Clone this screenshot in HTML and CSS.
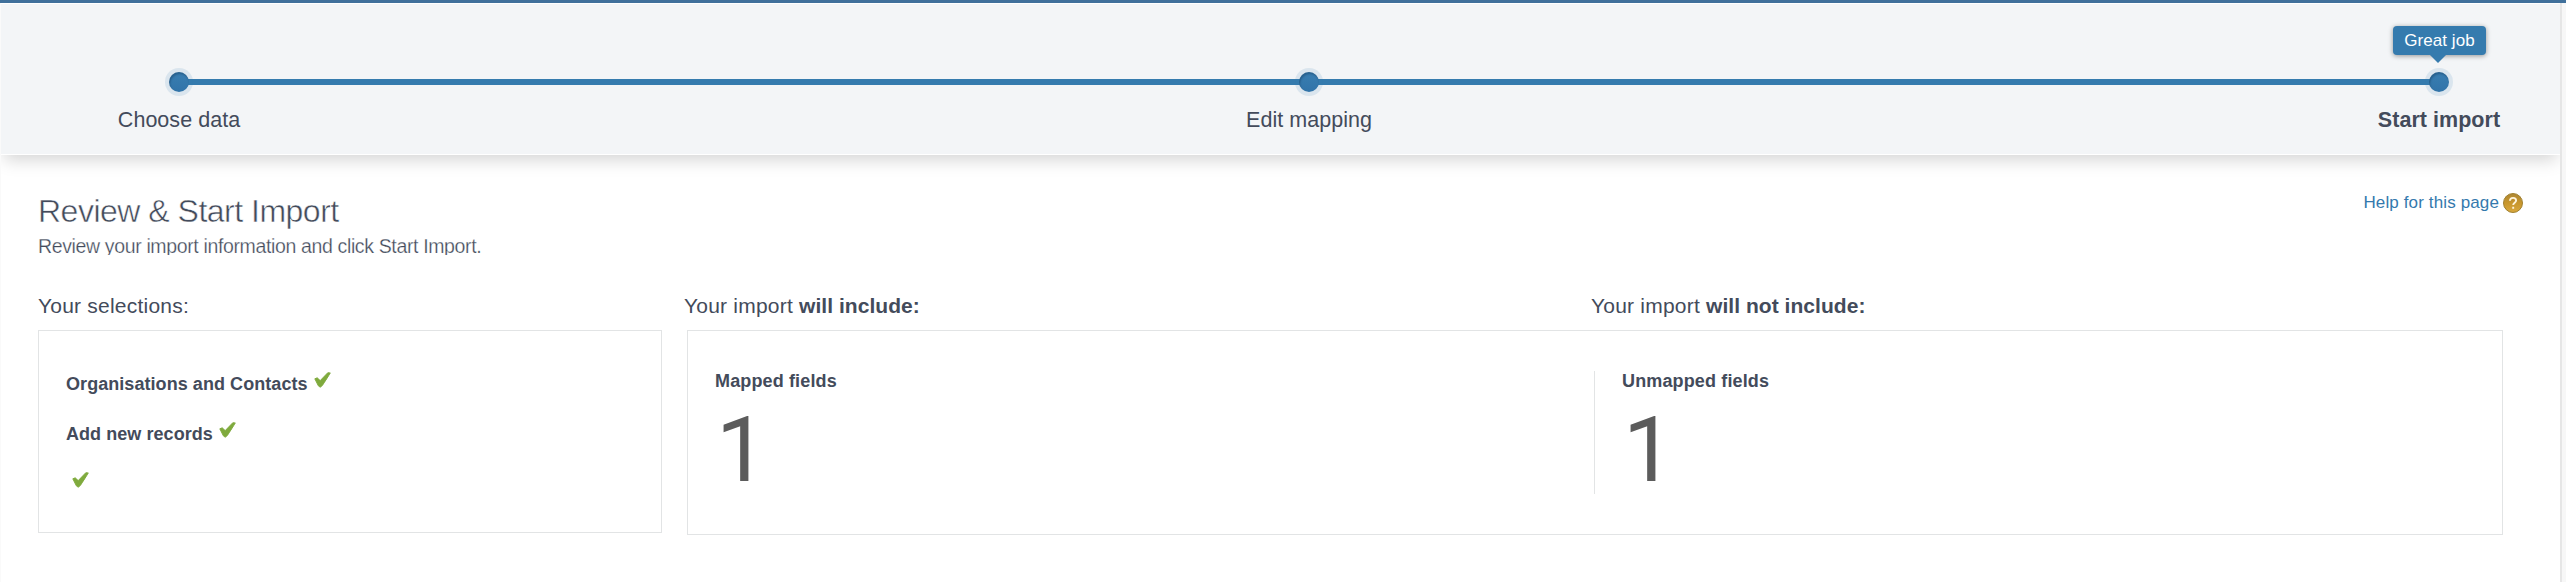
FILE: index.html
```
<!DOCTYPE html>
<html lang="en">
<head>
<meta charset="utf-8">
<title>Review &amp; Start Import</title>
<link rel="stylesheet" href="styles.css">
</head>
<body>
<svg class="defs" width="0" height="0" aria-hidden="true">
  <symbol id="check" viewBox="0 0 17 16"><path d="M.8 6.800 3.200 5.800 6.200 8.600 13.800.7 16.300.9C14.300 4.500 11.300 8.800 8.300 13.600L6.200 15.200 4.300 13.800Z" fill="#7faa3d" stroke="#7faa3d" stroke-width=".9" stroke-linejoin="round"/></symbol>
</svg>
<div class="page">
  <header class="steps">
    <div class="track">
      <span class="dot"></span>
      <span class="dot"></span>
      <span class="dot"><span class="tip">Great job</span></span>
    </div>
    <div class="labels">
      <span class="label">Choose data</span>
      <span class="label">Edit mapping</span>
      <span class="label current">Start import</span>
    </div>
  </header>
  <main class="content">
    <div class="intro">
      <div>
        <h1 class="title">Review &amp; Start Import</h1>
        <p class="subtitle">Review your import information and click Start Import.</p>
      </div>
      <a class="help"><span>Help for this page</span>
        <svg class="help-icon" viewBox="0 0 20 20"><defs><linearGradient id="gold" x1="0" y1="0" x2="0" y2="1"><stop offset="0" stop-color="#ad8733"/><stop offset=".5" stop-color="#c8962c"/><stop offset="1" stop-color="#d9a83d"/></linearGradient></defs><circle cx="10" cy="10" r="9.5" fill="url(#gold)" stroke="#a08030"/><path d="M6.900 7.800C7 5.800 8.300 4.900 10.100 4.900c1.800 0 3 1 3 2.600 0 2.300-2.900 2.300-2.900 4.600M10.200 13.700v2" fill="none" stroke="#fff4da" stroke-width="1.900"/></svg>
      </a>
    </div>
    <div class="columns">
      <section class="selections">
        <h2 class="heading">Your selections:</h2>
        <ul class="box list">
          <li class="item">Organisations and Contacts<svg class="check"><use href="#check"/></svg></li>
          <li class="item">Add new records<svg class="check"><use href="#check"/></svg></li>
          <li class="item"><svg class="check"><use href="#check"/></svg></li>
        </ul>
      </section>
      <section class="summary">
        <div class="headings">
          <h2 class="heading">Your import <b>will include:</b></h2>
          <h2 class="heading">Your import <b>will not include:</b></h2>
        </div>
        <div class="box fields">
          <div class="field"><h3 class="name">Mapped fields</h3><div class="count">1</div></div>
          <div class="field"><h3 class="name">Unmapped fields</h3><div class="count">1</div></div>
        </div>
      </section>
    </div>
  </main>
</div>
</body>
</html>
```

FILE: styles.css
```
* { box-sizing: border-box; }
body { margin: 0; height: 582px; overflow: hidden; background: #f7f7f7; color: #434b5b; font-family: "Liberation Sans", Arial, sans-serif; border-top: 3px solid #40709b; }
h1, h2, h3, p, ul { margin: 0; padding: 0; font-weight: 400; }
.defs { display: block; height: 0; }
.page { width: 2562px; height: 579px; background: #fff; border-left: 1px solid #fafafa; border-right: 2px solid #e6e6e6; overflow: hidden; }
.steps { height: 152px; padding: 65px 54px 0 111px; background: #f3f5f7; border-top: 1px solid #fff; border-bottom: 1px solid #fff; box-shadow: 0 8px 16px -3px rgba(0, 0, 0, .17); }
.track { display: flex; justify-content: space-between; align-items: center; height: 26px; margin: 0 57px; background: linear-gradient(#357bae, #357bae) center / calc(100% - 20px) 6px no-repeat; }
.dot { position: relative; width: 20px; height: 20px; border-radius: 50%; background: linear-gradient(#397eb1, #3174a9); box-shadow: 0 0 0 4px rgba(53, 123, 174, .13), inset 1px 2px 2px rgba(0, 30, 60, .3); }
.tip { position: absolute; left: -36px; top: -46px; width: 93px; height: 29px; border-radius: 4px; background: #357bae; color: #fff; font-size: 17px; letter-spacing: .05px; line-height: 29px; text-align: center; box-shadow: 0 1px 5px rgba(0, 0, 0, .4); }
.tip::after { content: ""; position: absolute; left: 37px; top: 29px; border: 8px solid transparent; border-top-color: #357bae; border-bottom: 0; }
.labels { display: flex; justify-content: space-between; margin-top: 11px; }
.label { width: 134px; line-height: 28px; font-size: 21.5px; letter-spacing: .04px; text-align: center; white-space: nowrap; }
.current { font-weight: 700; }
.content { padding: 0 0 0 37px; }
.intro { display: flex; justify-content: space-between; height: 138px; padding: 37px 37px 0 0; }
.title { font-size: 32px; line-height: 38px; letter-spacing: -.5px; -webkit-text-stroke: .5px #fff; }
.subtitle { height: 19px; margin-top: 6px; line-height: 20px; overflow: hidden; font-size: 19.5px; letter-spacing: -.36px; -webkit-text-stroke: .25px #fff; }
.help { display: flex; align-items: center; height: 21px; gap: 4px; font-size: 17px; letter-spacing: .13px; color: #3479ad; }
.help span { padding-top: 1px; }
.help-icon { width: 20px; height: 20px; }
.columns { display: flex; gap: 22px; }
.selections { width: 624px; }
.summary { width: 1819px; }
.headings { display: grid; grid-template-columns: 907px 1fr; }
.heading { height: 37px; font-size: 21px; line-height: 25px; letter-spacing: .22px; }
.heading b { letter-spacing: .04px; }
.box { border: 1px solid #e2e4e5; }
.list { height: 203px; padding: 38px 27px 0; list-style: none; }
.item { display: flex; height: 50px; font-size: 18px; font-weight: 700; line-height: 30px; letter-spacing: .06px; }
.check { width: 17px; height: 16px; margin: 3px 0 0 6px; }
.fields { display: flex; width: 1816px; height: 205px; margin-left: 3px; padding-top: 40px; }
.field { width: 906px; height: 123px; padding-left: 27px; }
.field + .field { border-left: 1px solid #e2e4e5; }
.name { font-size: 18px; font-weight: 700; line-height: 20px; letter-spacing: .14px; }
.count { color: #5c5c5c; font: 400 91px/90px Roboto, sans-serif; margin: 14px 0 0 1px; }
```
